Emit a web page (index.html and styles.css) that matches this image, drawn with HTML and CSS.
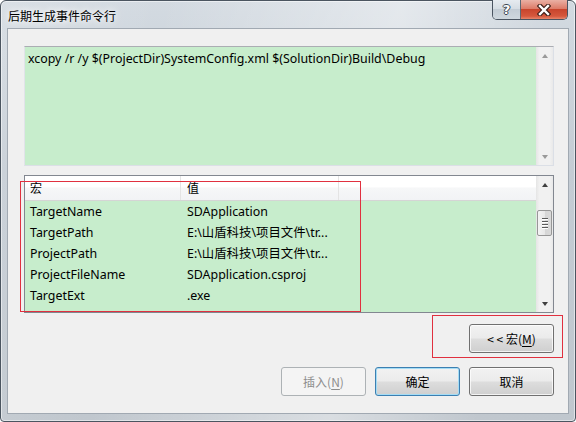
FILE: index.html
```html
<!DOCTYPE html>
<html lang="zh-CN">
<head>
    <meta charset="UTF-8">
    <meta name="viewport" content="width=device-width, initial-scale=1.0">
    <title>后期生成事件命令行</title>
    <link rel="stylesheet" href="styles.css">
</head>
<body>
    <div class="window">
        <div class="titlebar">
            <span class="title">后期生成事件命令行</span>
            <div class="caption">
                <span class="cap help">?</span>
                <span class="cap close">
                    <svg width="14" height="12" viewBox="0 0 14 12">
                        <path d="M3 2 L11 10 M11 2 L3 10" stroke="#40201a" stroke-width="4.6" stroke-linecap="square"/>
                        <path d="M3 2 L11 10 M11 2 L3 10" stroke="#fff" stroke-width="2.4" stroke-linecap="square"/>
                    </svg>
                </span>
            </div>
        </div>
        <div class="client">
            <div class="editbox">
                <div class="edit-text">xcopy /r /y $(ProjectDir)SystemConfig.xml $(SolutionDir)Build\Debug</div>
                <div class="vscroll dim">
                    <span class="arrow up"></span>
                    <span class="arrow down"></span>
                </div>
            </div>
            <div class="listview">
                <div class="lv-main">
                    <div class="lv-head">
                        <span class="col c1">宏</span>
                        <span class="col c2">值</span>
                        <span class="col c3"></span>
                    </div>
                    <div class="lv-row"><span class="col c1">TargetName</span><span class="col c2">SDApplication</span></div>
                    <div class="lv-row"><span class="col c1">TargetPath</span><span class="col c2">E:\山盾科技\项目文件\tr...</span></div>
                    <div class="lv-row"><span class="col c1">ProjectPath</span><span class="col c2">E:\山盾科技\项目文件\tr...</span></div>
                    <div class="lv-row"><span class="col c1">ProjectFileName</span><span class="col c2">SDApplication.csproj</span></div>
                    <div class="lv-row"><span class="col c1">TargetExt</span><span class="col c2">.exe</span></div>
                </div>
                <div class="vscroll">
                    <span class="arrow up"></span>
                    <span class="track"><span class="thumb"><i></i><i></i><i></i><i></i></span></span>
                    <span class="arrow down"></span>
                </div>
            </div>
            <div class="macro-row">
                <button class="btn">&lt; &lt; 宏(<u>M</u>)</button>
            </div>
            <div class="button-row">
                <button class="btn" disabled>插入(<u>N</u>)</button>
                <button class="btn btn-default">确定</button>
                <button class="btn">取消</button>
            </div>
            <div class="mark mark-list"></div>
            <div class="mark mark-macro"></div>
        </div>
    </div>
</body>
</html>
```

FILE: styles.css
```css
html, body {
    margin: 0;
}

body {
    width: 576px;
    height: 422px;
    overflow: hidden;
    font-family: "Noto Sans", "Noto Sans CJK SC", sans-serif;
    font-size: 12.4px;
    color: #000;
}

.window {
    box-sizing: border-box;
    width: 576px;
    height: 422px;
    display: flex;
    flex-direction: column;
    padding: 0 6px 7px 6px;
    border: 1px solid #4b5560;
    border-radius: 6px 6px 4px 4px;
    background:
        linear-gradient(100deg, rgba(255,255,255,0.15) 0%, rgba(255,255,255,0) 25%, rgba(255,255,255,0.4) 62%, rgba(255,255,255,0) 85%),
        linear-gradient(#d3dae1, #c4ccd4 40%, #c0c7ce);
    box-shadow: inset 0 0 0 1px rgba(255,255,255,0.5);
}

.titlebar {
    height: 27px;
    display: flex;
    align-items: flex-start;
}

.title {
    padding: 7px 0 0 1px;
    font-family: "Noto Sans CJK SC", sans-serif;
    font-size: 12px;
    line-height: 16px;
    text-shadow: 0 0 6px #fff, 0 0 10px rgba(255,255,255,0.9);
}

.caption {
    margin-left: auto;
    margin-right: 1px;
    margin-top: -1px;
    display: flex;
    border: 1px solid #4a5461;
    border-top: 0;
    border-radius: 0 0 5px 5px;
    overflow: hidden;
}

.cap {
    height: 19px;
    display: flex;
    align-items: center;
    justify-content: center;
}

.help {
    width: 27px;
    border-right: 1px solid #5d6873;
    background: linear-gradient(#e6ebf0, #d6dde4 45%, #c3ccd5 50%, #cfd7de);
    color: #fff;
    font-family: "DejaVu Sans", sans-serif;
    font-weight: bold;
    font-size: 13px;
    text-shadow: 1px 0 0 #3b4450, -1px 0 0 #3b4450, 0 1px 0 #3b4450, 0 -1px 0 #3b4450;
}

.close {
    width: 46px;
    background: linear-gradient(#eab0a4, #dd7c69 45%, #c8452d 50%, #d5583d 85%, #e8866c);
}

.client {
    position: relative;
    flex: 1;
    display: flex;
    flex-direction: column;
    padding: 17px 14px 17px 16px;
    background: #f0f0f0;
    border: 1px solid #a1a9b2;
}

.editbox {
    height: 120px;
    box-sizing: border-box;
    display: flex;
    border: 1px solid #dbdfe6;
    border-top-color: #abadb3;
    border-left-color: #e2e3ea;
}

.edit-text {
    flex: 1;
    padding: 4px 3px;
    line-height: 16px;
    white-space: nowrap;
    background: #c7edcc;
}

.vscroll {
    width: 17px;
    display: flex;
    flex-direction: column;
    background: linear-gradient(to right, #e5e5e5, #f1f1f1 20%, #f1f1f1 80%, #e9e9e9);
}

.arrow {
    height: 17px;
    display: flex;
    align-items: center;
    justify-content: center;
}

.arrow::before {
    content: "";
    border-left: 3.5px solid transparent;
    border-right: 3.5px solid transparent;
}

.arrow.up::before {
    border-bottom: 4px solid #404040;
}

.arrow.down {
    margin-top: auto;
}

.arrow.down::before {
    border-top: 4px solid #404040;
}

.vscroll.dim .arrow.up::before {
    border-bottom-color: #9a9a9a;
}

.vscroll.dim .arrow.down::before {
    border-top-color: #9a9a9a;
}

.track {
    display: flex;
    justify-content: center;
}

.thumb {
    box-sizing: border-box;
    width: 15px;
    height: 26px;
    margin-top: 17px;
    display: flex;
    flex-direction: column;
    align-items: center;
    justify-content: center;
    gap: 1px;
    border: 1px solid #979797;
    border-radius: 2px;
    background: linear-gradient(to right, #f4f4f4, #e8e8e8 50%, #d6d6d6 55%, #dadada);
}

.thumb i {
    display: block;
    width: 6px;
    height: 1px;
    background: #5a5a5a;
    box-shadow: 0 1px 0 #fff;
    margin-bottom: 1px;
}

.listview {
    height: 138px;
    box-sizing: border-box;
    margin-top: 9px;
    display: flex;
    border: 1px solid #828790;
}

.lv-main {
    flex: 1;
    overflow: hidden;
    background: #c7edcc;
}

.lv-head {
    height: 24px;
    display: flex;
    align-items: center;
    border-bottom: 1px solid #d5d5d5;
    background: linear-gradient(#ffffff, #ffffff 45%, #f6f7f8 50%, #f2f3f5);
    font-family: "Noto Sans CJK SC", sans-serif;
    font-size: 12px;
}

.lv-head .col {
    height: 24px;
    line-height: 24px;
    border-right: 1px solid #e4e4e4;
}

.col {
    box-sizing: border-box;
    white-space: nowrap;
    overflow: hidden;
}

.c1 {
    width: 156px;
    padding-left: 5px;
}

.c2 {
    width: 158px;
    padding-left: 6px;
}

.c3 {
    flex: 1;
}

.lv-head .c3 {
    border-right: 0;
}

.lv-row {
    display: flex;
    height: 21px;
    line-height: 21px;
}

.macro-row,
.button-row {
    display: flex;
    justify-content: flex-end;
    gap: 9px;
}

.macro-row {
    margin-top: 11px;
}

.button-row {
    margin-top: 14px;
}

.btn {
    box-sizing: border-box;
    width: 85px;
    height: 29px;
    padding: 0;
    font-family: "Noto Sans CJK SC", sans-serif;
    font-size: 12px;
    color: #000;
    border: 1px solid #707070;
    border-radius: 3px;
    background: linear-gradient(#f2f2f2, #ebebeb 48%, #dddddd 52%, #cfcfcf);
    box-shadow: inset 0 0 0 1px rgba(255,255,255,0.75);
}

.btn u {
    text-decoration-thickness: 1px;
    text-underline-offset: 2px;
}

.btn-default {
    border-color: #3c7fb1;
    box-shadow: inset 0 0 0 1px #a4dcf5;
}

.btn:disabled {
    color: #8d8d8d;
    border-color: #adb2b5;
    background: #f4f4f4;
    box-shadow: none;
}

.mark {
    position: absolute;
    box-sizing: border-box;
    border: 1px solid #e0303f;
}

.mark-list {
    left: 12px;
    top: 152px;
    width: 341px;
    height: 131px;
}

.mark-macro {
    left: 424px;
    top: 286px;
    width: 131px;
    height: 43px;
}
```
